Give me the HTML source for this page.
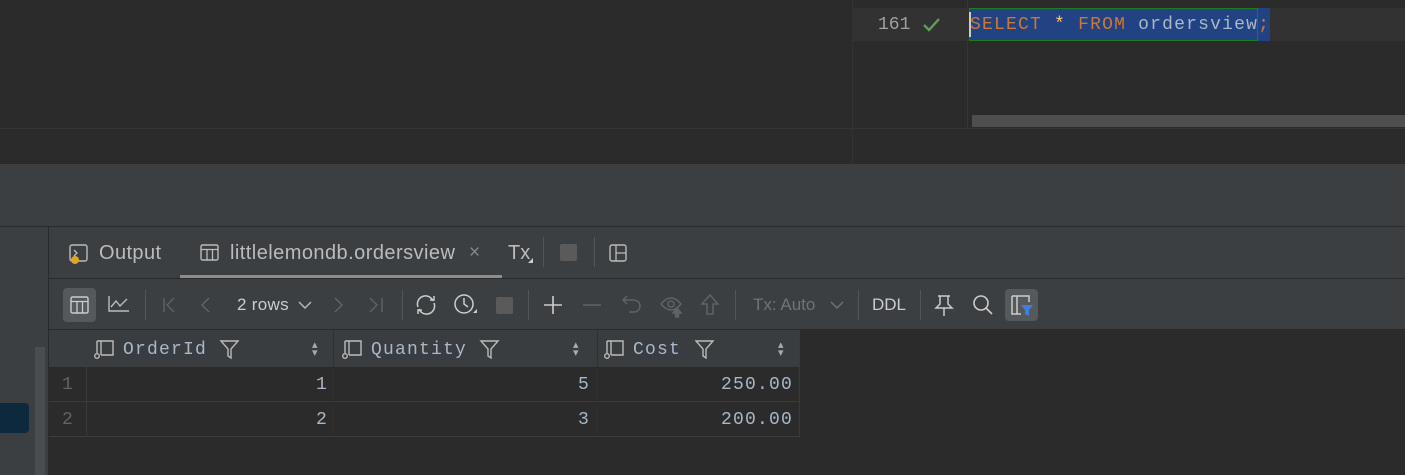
<!DOCTYPE html>
<html><head><style>
*{margin:0;padding:0;box-sizing:border-box}
body{width:1405px;height:475px;background:#2b2b2b;position:relative;overflow:hidden;font-family:"Liberation Sans",sans-serif;color:#bbbbbb}
.a{position:absolute}
.mono{font-family:"Liberation Mono",monospace;letter-spacing:1.2px}
svg{position:absolute;overflow:visible}
</style></head><body>
<!-- editor -->
<div class="a" style="left:0;top:128px;width:1405px;height:1px;background:#353535"></div>
<div class="a" style="left:852px;top:0;width:1px;height:164px;background:#323232"></div>
<div class="a" style="left:967px;top:0;width:1px;height:128px;background:#353535"></div>
<div class="a" style="left:852px;top:8px;width:553px;height:33px;background:#323232"></div>
<div class="a mono" style="left:878px;top:15px;font-size:18px;color:#a0a0a0;letter-spacing:0">161</div>
<svg style="left:922px;top:17px" width="20" height="16"><path d="M2 8 L7 13 L17 2" stroke="#5e9e5e" stroke-width="2.4" fill="none"/></svg>
<div class="a" style="left:969px;top:8px;width:301px;height:33px;background:#214283"></div>
<div class="a" style="left:969px;top:8px;width:289px;height:33px;border:1px solid #1e7a1e"></div>
<div class="a" style="left:969px;top:12px;width:2px;height:25px;background:#cccccc"></div>
<div class="a mono" style="left:970px;top:15px;font-size:18px;white-space:pre;color:#a9b7c6"><span style="color:#cc7832">SELECT</span> <span style="color:#ffc66d">*</span> <span style="color:#cc7832">FROM</span> ordersview<span style="color:#cc7832">;</span></div>
<div class="a" style="left:972px;top:115px;width:433px;height:12px;background:#4e4e4e"></div>
<!-- toolbar area -->
<div class="a" style="left:0;top:164px;width:1405px;height:63px;background:#3c3f41"></div>
<div class="a" style="left:0;top:226px;width:1405px;height:1px;background:#2b2b2b"></div>
<div class="a" style="left:0;top:227px;width:1405px;height:103px;background:#3c3f41"></div>
<div class="a" style="left:0;top:330px;width:48px;height:145px;background:#3c3f41"></div>
<div class="a" style="left:48px;top:227px;width:1px;height:248px;background:#2b2b2b"></div>
<div class="a" style="left:0;top:403px;width:29px;height:30px;background:#0d293e;border-radius:0 4px 4px 0"></div>
<div class="a" style="left:35px;top:347px;width:10px;height:128px;background:#4a4d50"></div>
<div class="a" style="left:49px;top:278px;width:1356px;height:1px;background:#2b2b2b"></div>
<div class="a" style="left:49px;top:329px;width:1356px;height:1px;background:#2b2b2b"></div>
<!-- tabs -->
<svg style="left:69px;top:244px" width="20" height="20"><rect x="1" y="1" width="17" height="16" rx="2" stroke="#bbb" stroke-width="1.4" fill="none"/><path d="M5 6 L8 9 L5 12" stroke="#bbb" stroke-width="1.3" fill="none"/><circle cx="6" cy="16" r="4" fill="#e0a526"/></svg>
<div class="a" style="left:99px;top:242px;font-size:20px;letter-spacing:0.4px">Output</div>
<svg style="left:200px;top:244px" width="20" height="18"><rect x="1" y="1" width="17" height="15" rx="1.5" stroke="#bbb" stroke-width="1.4" fill="none"/><path d="M1 5.5H18M7 5.5V16M12.5 5.5V16" stroke="#bbb" stroke-width="1.3"/></svg>
<div class="a" style="left:230px;top:242px;font-size:20px;letter-spacing:0.45px">littlelemondb.ordersview</div>
<div class="a" style="left:469px;top:242px;font-size:19px;color:#888">×</div>
<div class="a" style="left:180px;top:275px;width:322px;height:3px;background:#8c8c8c"></div>
<div class="a" style="left:508px;top:242px;font-size:20px">Tx</div>
<div class="a" style="left:528px;top:258px;width:0;height:0;border-left:5px solid transparent;border-bottom:5px solid #ccc"></div>
<div class="a" style="left:543px;top:237px;width:1px;height:30px;background:#555"></div>
<div class="a" style="left:560px;top:244px;width:17px;height:17px;background:#5a5a5a;border-radius:2px"></div>
<div class="a" style="left:594px;top:237px;width:1px;height:30px;background:#555"></div>
<svg style="left:609px;top:244px" width="18" height="18"><rect x="1" y="1" width="16" height="16" rx="2" stroke="#bbb" stroke-width="1.4" fill="none"/><path d="M7 1V17M7 9H17" stroke="#bbb" stroke-width="1.3"/></svg>
<!-- toolbar -->
<div class="a" style="left:63px;top:288px;width:33px;height:34px;background:#55595c;border-radius:4px"></div>
<svg style="left:70px;top:296px" width="20" height="18"><rect x="1" y="1" width="17" height="16" rx="1.5" stroke="#ccc" stroke-width="1.4" fill="none"/><path d="M1 5.5H18M7 5.5V17M12.5 5.5V17" stroke="#ccc" stroke-width="1.3"/></svg>
<svg style="left:108px;top:295px" width="22" height="18"><path d="M1 1V16H21M3 12L8 6L12 11L19 4" stroke="#bbb" stroke-width="1.4" fill="none"/></svg>
<div class="a" style="left:145px;top:290px;width:1px;height:30px;background:#555"></div>
<svg style="left:162px;top:297px" width="14" height="16" stroke="#5f6366" stroke-width="1.4" fill="none"><path d="M2 1V15M12 1L5 8L12 15"/></svg>
<svg style="left:200px;top:297px" width="12" height="16" stroke="#5f6366" stroke-width="1.4" fill="none"><path d="M9 1L2 8L9 15"/></svg>
<div class="a" style="left:237px;top:295px;font-size:17px;color:#ccc;letter-spacing:0.3px">2 rows</div>
<svg style="left:298px;top:301px" width="14" height="9" stroke="#bbb" stroke-width="1.4" fill="none"><path d="M1 1L7 7L13 1"/></svg>
<svg style="left:332px;top:297px" width="12" height="16" stroke="#5f6366" stroke-width="1.4" fill="none"><path d="M3 1L10 8L3 15"/></svg>
<svg style="left:368px;top:297px" width="16" height="16" stroke="#5f6366" stroke-width="1.4" fill="none"><path d="M2 1L9 8L2 15M14 1V15"/></svg>
<div class="a" style="left:402px;top:290px;width:1px;height:30px;background:#555"></div>
<svg style="left:414px;top:294px" width="24" height="22" stroke="#ccc" stroke-width="1.5" fill="none"><path d="M4 13A8 8 0 0 1 19 7M20 9A8 8 0 0 1 5 15M16 6H20V2M8 16H4V20"/></svg>
<svg style="left:453px;top:293px" width="26" height="26" stroke="#ccc" stroke-width="1.5" fill="none"><circle cx="11" cy="11" r="9"/><path d="M11 5V11L15 14"/><path d="M20 20L24 20L24 16Z" fill="#ccc" stroke="none"/></svg>
<div class="a" style="left:496px;top:297px;width:17px;height:17px;background:#5a5a5a;border-radius:2px"></div>
<div class="a" style="left:528px;top:290px;width:1px;height:30px;background:#555"></div>
<svg style="left:543px;top:295px" width="20" height="20" stroke="#ccc" stroke-width="1.6"><path d="M10 1V19M1 10H19"/></svg>
<svg style="left:582px;top:295px" width="20" height="20" stroke="#5f6366" stroke-width="1.6"><path d="M1 10H19"/></svg>
<svg style="left:621px;top:294px" width="22" height="20" stroke="#5f6366" stroke-width="1.5" fill="none"><path d="M6 2L2 6L6 10M2 6H13A6 6 0 0 1 13 18H8"/></svg>
<svg style="left:660px;top:294px" width="26" height="24" stroke="#5f6366" stroke-width="1.5" fill="none"><path d="M1 10Q11 -2 21 10Q11 22 1 10Z"/><circle cx="11" cy="10" r="3"/><path d="M17 14L13 19H15.5V23H18.5V19H21Z" fill="#5f6366"/></svg>
<svg style="left:700px;top:294px" width="20" height="22" stroke="#5f6366" stroke-width="1.5" fill="none"><path d="M10 1L2 10H7V20H13V10H18Z"/></svg>
<div class="a" style="left:735px;top:290px;width:1px;height:30px;background:#555"></div>
<div class="a" style="left:753px;top:295px;font-size:17px;color:#6f7377">Tx: Auto</div>
<svg style="left:830px;top:301px" width="14" height="9" stroke="#6f7377" stroke-width="1.4" fill="none"><path d="M1 1L7 7L13 1"/></svg>
<div class="a" style="left:858px;top:290px;width:1px;height:30px;background:#555"></div>
<div class="a" style="left:872px;top:295px;font-size:17px;color:#ccc">DDL</div>
<div class="a" style="left:920px;top:290px;width:1px;height:30px;background:#555"></div>
<svg style="left:934px;top:294px" width="20" height="24" stroke="#ccc" stroke-width="1.5" fill="none"><path d="M4 2H16M6 2V10L2 14H18L14 10V2M10 14V22"/></svg>
<svg style="left:972px;top:294px" width="22" height="22" stroke="#ccc" stroke-width="1.6" fill="none"><circle cx="9" cy="9" r="7"/><path d="M14 14L20 20"/></svg>
<div class="a" style="left:1005px;top:289px;width:33px;height:32px;background:#55595c;border-radius:4px"></div>
<svg style="left:1011px;top:295px" width="24" height="22" fill="none"><path d="M1 1H18V7M6 1V19M1 1V19H10" stroke="#ccc" stroke-width="1.5"/><path d="M10 10H22L18 15V21L14 19V15Z" fill="#3f7fe0"/></svg>
<!-- grid -->
<div class="a" style="left:49px;top:330px;width:751px;height:37px;background:#3a3d3f"></div>
<div class="a" style="left:49px;top:367px;width:751px;height:70px;background:#2b2b2b;border-bottom:1px solid #3c3f41;border-right:1px solid #3c3f41"></div>
<div class="a" style="left:49px;top:401px;width:751px;height:1px;background:#3a3a3a"></div>
<div class="a" style="left:86px;top:330px;width:1px;height:107px;background:#3a3a3a"></div>
<div class="a" style="left:333px;top:330px;width:1px;height:107px;background:#2f2f2f"></div>
<div class="a" style="left:597px;top:330px;width:1px;height:107px;background:#2f2f2f"></div>
<div class="a" style="left:799px;top:330px;width:1px;height:107px;background:#3a3a3a"></div>

<svg style="left:93px;top:339px" width="24" height="22" stroke="#bbb" stroke-width="1.4" fill="none"><path d="M4 2H20V16H8M4 2V14M8 2V16"/><circle cx="4" cy="17" r="2.3"/></svg>
<div class="a mono" style="left:123px;top:340px;font-size:18px;color:#a9b7c6">OrderId</div>
<svg style="left:220px;top:340px" width="20" height="20" stroke="#bbb" stroke-width="1.4" fill="none"><path d="M1 1H18L11 9V18L8 16V9Z"/></svg>
<div class="a" style="left:312px;top:341px;font-size:11px;color:#aaa;line-height:8px">▴<br>▾</div>

<svg style="left:341px;top:339px" width="24" height="22" stroke="#bbb" stroke-width="1.4" fill="none"><path d="M4 2H20V16H8M4 2V14M8 2V16"/><circle cx="4" cy="17" r="2.3"/></svg>
<div class="a mono" style="left:371px;top:340px;font-size:18px;color:#a9b7c6">Quantity</div>
<svg style="left:480px;top:340px" width="20" height="20" stroke="#bbb" stroke-width="1.4" fill="none"><path d="M1 1H18L11 9V18L8 16V9Z"/></svg>
<div class="a" style="left:573px;top:341px;font-size:11px;color:#aaa;line-height:8px">▴<br>▾</div>

<svg style="left:603px;top:339px" width="24" height="22" stroke="#bbb" stroke-width="1.4" fill="none"><path d="M4 2H20V16H8M4 2V14M8 2V16"/><circle cx="4" cy="17" r="2.3"/></svg>
<div class="a mono" style="left:633px;top:340px;font-size:18px;color:#a9b7c6">Cost</div>
<svg style="left:695px;top:340px" width="20" height="20" stroke="#bbb" stroke-width="1.4" fill="none"><path d="M1 1H18L11 9V18L8 16V9Z"/></svg>
<div class="a" style="left:778px;top:341px;font-size:11px;color:#aaa;line-height:8px">▴<br>▾</div>

<div class="a mono" style="left:62px;top:375px;font-size:18px;color:#606366">1</div>
<div class="a mono" style="left:62px;top:410px;font-size:18px;color:#606366">2</div>
<div class="a mono" style="left:86px;width:242px;text-align:right;top:375px;font-size:18px;color:#a9b7c6">1</div>
<div class="a mono" style="left:86px;width:242px;text-align:right;top:410px;font-size:18px;color:#a9b7c6">2</div>
<div class="a mono" style="left:334px;width:256px;text-align:right;top:375px;font-size:18px;color:#a9b7c6">5</div>
<div class="a mono" style="left:334px;width:256px;text-align:right;top:410px;font-size:18px;color:#a9b7c6">3</div>
<div class="a mono" style="left:598px;width:195px;text-align:right;top:375px;font-size:18px;color:#a9b7c6">250.00</div>
<div class="a mono" style="left:598px;width:195px;text-align:right;top:410px;font-size:18px;color:#a9b7c6">200.00</div>
</body></html>
